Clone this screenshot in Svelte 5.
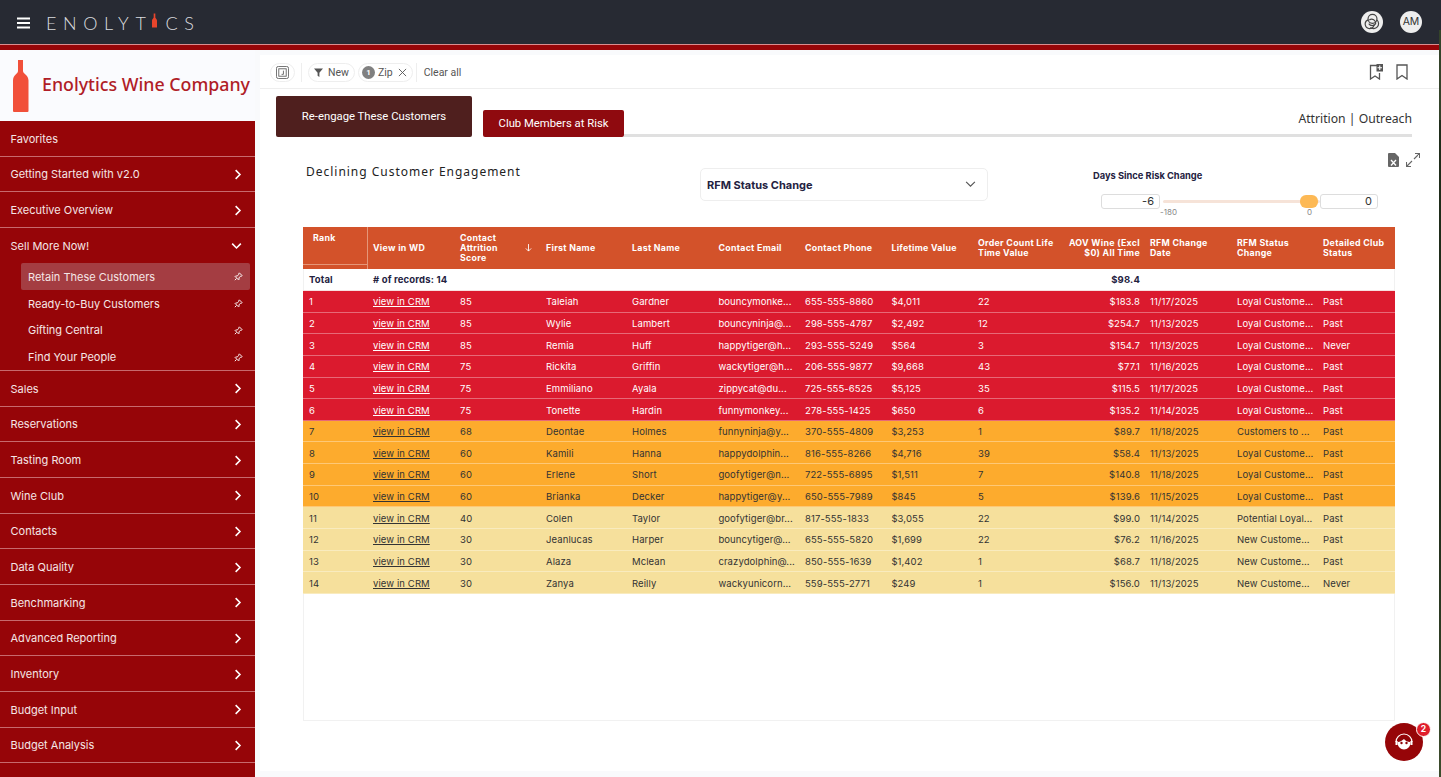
<script>
  const menuTop = ['Favorites', 'Getting Started with v2.0', 'Executive Overview'];
  const subs = ['Retain These Customers', 'Ready-to-Buy Customers', 'Gifting Central', 'Find Your People'];
  const menuBottom = ['Sales', 'Reservations', 'Tasting Room', 'Wine Club', 'Contacts', 'Data Quality', 'Benchmarking', 'Advanced Reporting', 'Inventory', 'Budget Input', 'Budget Analysis'];
  const heads = [
    ['Rank', 'rank'], ['View in WD', 'wd'], ['Contact Attrition Score', 'score'], ['First Name', ''], ['Last Name', ''],
    ['Contact Email', ''], ['Contact Phone', ''], ['Lifetime Value', ''], ['Order Count Life Time Value', ''],
    ['AOV Wine (Excl $0) All Time', 'num'], ['RFM Change Date', 'date'], ['RFM Status Change', ''], ['Detailed Club Status', '']
  ];
  const rows = [
    ['red', 85, 'Taleiah', 'Gardner', 'bouncymonke...', '655-555-8860', '$4,011', 22, '$183.8', '11/17/2025', 'Loyal Custome...', 'Past'],
    ['red', 85, 'Wylie', 'Lambert', 'bouncyninja@...', '298-555-4787', '$2,492', 12, '$254.7', '11/13/2025', 'Loyal Custome...', 'Past'],
    ['red', 85, 'Remia', 'Huff', 'happytiger@h...', '293-555-5249', '$564', 3, '$154.7', '11/13/2025', 'Loyal Custome...', 'Never'],
    ['red', 75, 'Rickita', 'Griffin', 'wackytiger@h...', '206-555-9877', '$9,668', 43, '$77.1', '11/16/2025', 'Loyal Custome...', 'Past'],
    ['red', 75, 'Emmiliano', 'Ayala', 'zippycat@du...', '725-555-6525', '$5,125', 35, '$115.5', '11/17/2025', 'Loyal Custome...', 'Past'],
    ['red', 75, 'Tonette', 'Hardin', 'funnymonkey...', '278-555-1425', '$650', 6, '$135.2', '11/14/2025', 'Loyal Custome...', 'Past'],
    ['orange', 68, 'Deontae', 'Holmes', 'funnyninja@y...', '370-555-4809', '$3,253', 1, '$89.7', '11/18/2025', 'Customers to ...', 'Past'],
    ['orange', 60, 'Kamili', 'Hanna', 'happydolphin...', '816-555-8266', '$4,716', 39, '$58.4', '11/13/2025', 'Loyal Custome...', 'Past'],
    ['orange', 60, 'Erlene', 'Short', 'goofytiger@n...', '722-555-6895', '$1,511', 7, '$140.8', '11/18/2025', 'Loyal Custome...', 'Past'],
    ['orange', 60, 'Brianka', 'Decker', 'happytiger@y...', '650-555-7989', '$845', 5, '$139.6', '11/15/2025', 'Loyal Custome...', 'Past'],
    ['yellow', 40, 'Colen', 'Taylor', 'goofytiger@br...', '817-555-1833', '$3,055', 22, '$99.0', '11/14/2025', 'Potential Loyal...', 'Past'],
    ['yellow', 30, 'Jeanlucas', 'Harper', 'bouncytiger@...', '655-555-5820', '$1,699', 22, '$76.2', '11/16/2025', 'New Custome...', 'Past'],
    ['yellow', 30, 'Alaza', 'Mclean', 'crazydolphin@...', '850-555-1639', '$1,402', 1, '$68.7', '11/18/2025', 'New Custome...', 'Past'],
    ['yellow', 30, 'Zanya', 'Reilly', 'wackyunicorn...', '559-555-2771', '$249', 1, '$156.0', '11/13/2025', 'New Custome...', 'Never']
  ];
</script>

{#snippet chevron()}
  <svg class="chev" viewBox="0 0 10 14" width="8" height="11"><path d="M2 1.5 7.5 7 2 12.5" fill="none" stroke="#fff" stroke-width="2"/></svg>
{/snippet}
{#snippet pin()}
  <svg class="pin" viewBox="0 0 16 16" width="9" height="9"><path d="M9.5 1.5 14.5 6.5 13 7.5 11.5 7.5 8.8 10.5 9 13 8 14 2 8 3 7 5.5 7.2 8.5 4.5 8.5 3Z" fill="none" stroke="#fff" stroke-width="1.7"/><path d="M4.5 11.5 1.5 14.5" stroke="#fff" stroke-width="1.7"/></svg>
{/snippet}

<div class="page">
  <div class="window">
    <header class="top">
      <div class="brand">
        <svg class="burger" viewBox="0 0 13 12" width="13" height="12"><path d="M0 1.5h13M0 6h13M0 10.5h13" stroke="#fff" stroke-width="2"/></svg>
        <span class="logo">ENOLYT<svg class="logo-i" viewBox="0 0 6 17" width="5" height="17"><path d="M2 0h2v5c0 1 2 1.500 2 3.500V17H0V8.500C0 6.500 2 6 2 5Z" fill="#e8452c"/></svg>CS</span>
      </div>
      <div class="top-right">
        <span class="round"><svg viewBox="0 0 16 16" width="17" height="17" fill="none" stroke="#444" stroke-width="1.100"><circle cx="8" cy="5.500" r="4.200"/><path d="M3.900 6.500A4.200 4.200 0 1 0 9.500 11M12.100 6.500A4.200 4.200 0 1 1 6 13.500"/><path d="M5 6.500a3.800 3.800 0 0 1 6 3.500 3.800 3.800 0 0 1-6.500 0"/></svg></span>
        <span class="round am">AM</span>
      </div>
    </header>
    <div class="strip"></div>

    <div class="body">
      <aside class="side">
        <div class="company">
          <svg viewBox="0 0 16 52" width="16" height="52"><path d="M5 0h5v11c0 3 5.500 4 5.500 9.500V51a1 1 0 0 1-1 1H1a1 1 0 0 1-1-1V20.500C0 15 5 14 5 11Z" fill="#f1503a"/></svg>
          <span class="company-name">Enolytics Wine Company</span>
        </div>
        <nav class="menu">
          {#each menuTop as m, i}
            <div class="item">{m}{#if i > 0}{@render chevron()}{/if}</div>
          {/each}
          <div class="group">
            <div class="item open">Sell More Now!<svg class="chev" viewBox="0 0 14 10" width="11" height="8"><path d="M1.500 2 7 7.500 12.500 2" fill="none" stroke="#fff" stroke-width="2"/></svg></div>
            {#each subs as s, i}
              <div class="sub" class:active={i === 0}>{s}{@render pin()}</div>
            {/each}
          </div>
          {#each menuBottom as m}
            <div class="item">{m}{@render chevron()}</div>
          {/each}
        </nav>
      </aside>

      <main class="main">
        <div class="filterbar">
          <div class="filters">
            <span class="pill square"><svg viewBox="0 0 14 14" width="13" height="13" fill="none" stroke="#666"><rect x=".5" y=".5" width="13" height="13" rx="2"/><rect x="3" y="3" width="8" height="8"/><path d="M8 5v4H6"/></svg></span>
            <span class="vr"></span>
            <span class="pill"><svg viewBox="0 0 10 10" width="9" height="9"><path d="M0 .5h10L6 5.200V10L4 8.500V5.200Z" fill="#555"/></svg>New</span>
            <span class="pill zip"><span class="count">1</span>Zip<svg viewBox="0 0 10 10" width="9" height="9"><path d="M1 1l8 8M9 1 1 9" stroke="#555" stroke-width="1"/></svg></span>
            <span class="vr"></span>
            <span class="clear">Clear all</span>
          </div>
          <div class="marks">
            <svg viewBox="0 0 14 16" width="14" height="16" fill="none" stroke="#555" stroke-width="1.300"><path d="M8 1.500H1.500V15L6 12l4.500 3V9"/><rect x="7.500" y="0" width="6.500" height="7.500" fill="#555" stroke="none"/><path d="M10.750 1.500v4.500M8.500 3.750h4.500" stroke="#fff" stroke-width="1.100"/></svg>
            <svg viewBox="0 0 12 16" width="12" height="16" fill="none" stroke="#555" stroke-width="1.300"><path d="M1 1h10v14l-5-3.500L1 15Z"/></svg>
          </div>
        </div>

        <div class="tabs">
          <div class="tab big">Re-engage These Customers</div>
          <div class="tab small">Club Members at Risk</div>
          <div class="tabline"><span>Attrition | Outreach</span></div>
        </div>

        <section class="panel">
          <div class="tools">
            <svg viewBox="0 0 11 14" width="11" height="14"><path d="M0 1a1 1 0 0 1 1-1h6l4 4v9a1 1 0 0 1-1 1H1a1 1 0 0 1-1-1Z" fill="#666"/><path d="M3 7l5 5.500M8 7l-5 5.500" stroke="#fff" stroke-width="1.300"/></svg>
            <svg viewBox="0 0 14 14" width="14" height="14" fill="none" stroke="#666" stroke-width="1.100"><path d="M8 6l5.500-5.500M9 .5h4.500V5M6 8 .5 13.500M.5 9v4.500H5"/></svg>
          </div>
          <div class="controls">
            <h2>Declining Customer Engagement</h2>
            <div class="select"><b>RFM Status Change</b><svg viewBox="0 0 12 8" width="11" height="7"><path d="M1 1l5 5 5-5" fill="none" stroke="#555" stroke-width="1.300"/></svg></div>
            <div class="range">
              <div class="range-label">Days Since Risk Change</div>
              <div class="range-row">
                <span class="box first">-6</span>
                <span class="track"><span class="thumb"></span><span class="tick start">-180</span><span class="tick end">0</span></span>
                <span class="box">0</span>
              </div>
            </div>
          </div>

          <div class="table">
            <div class="row head">
              {#each heads as h}
                <div class="cell {h[1]}">
                  {#if h[1] === 'score'}<span class="score-t">{h[0]}</span><svg viewBox="0 0 8 9" width="7" height="8"><path d="M4 0v8M1 5l3 3 3-3" fill="none" stroke="#fff"/></svg>
                  {:else if h[1] === 'rank'}<span class="rank-t">{h[0]}</span>
                  {:else}{h[0]}{/if}
                </div>
              {/each}
            </div>
            <div class="row total">
              <div class="cell">Total</div>
              <div class="cell span"># of records: 14</div>
              <div class="cell num">$98.4</div>
            </div>
            {#each rows as r, i}
              <div class="row data {r[0]}">
                <div class="cell">{i + 1}</div>
                <div class="cell"><u>view in CRM</u></div>
                <div class="cell">{r[1]}</div>
                <div class="cell">{r[2]}</div>
                <div class="cell">{r[3]}</div>
                <div class="cell">{r[4]}</div>
                <div class="cell">{r[5]}</div>
                <div class="cell">{r[6]}</div>
                <div class="cell">{r[7]}</div>
                <div class="cell num">{r[8]}</div>
                <div class="cell">{r[9]}</div>
                <div class="cell">{r[10]}</div>
                <div class="cell">{r[11]}</div>
              </div>
            {/each}
          </div>
        </section>
      </main>
    </div>
  </div>
  <div class="wallpaper"></div>

  <div class="chat">
    <svg viewBox="0 0 24 24" width="24" height="24"><path d="M4 12a8 8 0 0 1 16 0" fill="none" stroke="#fff" stroke-width="1.200"/><path d="M5.500 12.500C5.500 7 18.500 7 18.500 12.500c0 4-3 7-6.500 7s-6.500-3-6.500-7Z" fill="#fff"/><path d="M6 12c2 0 3.500-1 6-3 1.500 2 3.500 3 6 3v-3L12 6.500 6 9Z" fill="#8f0508"/><circle cx="9.500" cy="13" r="1.200" fill="#8f0508"/><circle cx="14.500" cy="13" r="1.200" fill="#8f0508"/><path d="M3.500 11h2v4h-2zM18.500 11h2v4h-2z" fill="#fff"/></svg>
    <span class="badge">2</span>
  </div>
</div>

<style>
  :global(body) { margin: 0; background: #fff; overflow: hidden; }
  .page { display: flex; width: 1441px; height: 777px; position: relative; overflow: hidden; font-family: Inter, sans-serif; }
  .window { width: 1439px; height: 777px; display: flex; flex-direction: column; background: #f9fafc; }
  .wallpaper { width: 2px; background: linear-gradient(#272a33 0 30px, #34432a 30px 120px, #1f2c1a 120px 500px, #3c4c2c); }

  .top { height: 44px; background: #272a33; display: flex; justify-content: space-between; align-items: center; padding: 0 17px; flex: none; }
  .brand { display: flex; align-items: center; gap: 16px; margin-top: 1px; }
  .burger { display: block; }
  .logo { font: 300 18px Lato, sans-serif; letter-spacing: 6.6px; color: #d9dbdf; display: flex; align-items: center; }
  .logo-i { margin: -5px 8px 0 0; }
  .top-right { display: flex; gap: 17px; margin-top: -1px; }
  .round { width: 22px; height: 22px; border-radius: 50%; background: #eeeeee; display: flex; align-items: center; justify-content: center; }
  .am { font-size: 10.5px; color: #333; }
  .strip { height: 6px; flex: none; background: #960508; border-top: 1px solid #d98d8f; box-sizing: border-box; }

  .body { display: flex; flex: 1; min-height: 0; }
  .side { width: 255px; flex: none; display: flex; flex-direction: column; height: 727px; }
  .company { height: 71px; flex: none; display: flex; align-items: center; gap: 13px; padding-left: 13px; box-sizing: border-box; background: #fafbfe; }
  .company-name { color: #b01d27; font: 500 17.8px "Noto Sans", sans-serif; white-space: nowrap; margin-top: -3px; }
  .menu { flex: 1; background: #960508; color: #f5e6e6; font-size: 11px; }
  .item { height: 35.67px; box-sizing: border-box; border-bottom: 1px solid #c76a6d; display: flex; align-items: center; justify-content: space-between; padding: 1px 13px 0 10.500px; }
  .item.open { border-bottom: 0; height: 35px; }
  .group { border-bottom: 1px solid #c76a6d; height: 143px; box-sizing: border-box; }
  .sub { height: 26.800px; margin: 0 5px 0 21px; padding: 1px 7px 0; box-sizing: border-box; border-radius: 2px; display: flex; align-items: center; justify-content: space-between; }
  .sub.active { background: #a43d42; }
  .chev { display: block; }
  .pin { display: block; }

  .main { flex: 1; margin: 5px 0 6px 5px; background: #fff; display: flex; flex-direction: column; min-width: 0; }
  .filterbar { height: 34px; flex: none; box-sizing: border-box; border-bottom: 1px solid #eeeeee; display: flex; justify-content: space-between; align-items: center; padding: 0 31px 0 10px; }
  .filters { display: flex; align-items: center; font: 400 10.5px Roboto, sans-serif; color: #555; padding-top: 1px; }
  .pill { height: 19px; box-sizing: border-box; border: 1px solid #eeeeee; border-radius: 10px; display: flex; align-items: center; gap: 5px; padding: 0 5px; margin-right: 3px; }
  .square { width: 25px; padding: 0; justify-content: center; border-radius: 10px; margin-right: 6px; }
  .zip { padding-left: 3px; gap: 3px; }
  .zip svg { margin-left: 2px; }
  .count { width: 13px; height: 13px; border-radius: 50%; background: #808080; color: #fff; font-size: 8px; font-weight: 700; display: flex; align-items: center; justify-content: center; }
  .vr { width: 1px; height: 19px; background: #eeeeee; margin-right: 6px; }
  .clear { margin-left: 1px; }
  .marks { display: flex; gap: 13px; align-items: center; }

  .tabs { flex: none; display: flex; align-items: flex-end; padding: 0 27px 0 16px; margin-top: 7px; box-sizing: border-box; height: 41px; }
  .tab { background: #8f0a0f; color: #fff; font: 400 11.300px Roboto, sans-serif; display: flex; align-items: center; justify-content: center; border-radius: 2px; flex: none; }
  .big { width: 196px; height: 41px; background: #4f1f1e; padding-bottom: 1px; box-sizing: border-box; }
  .small { width: 141px; height: 27px; margin-left: 11px; padding-bottom: 1px; box-sizing: border-box; }
  .tabline { flex: 1; border-bottom: 3px solid #e0e0e0; height: 26px; box-sizing: border-box; text-align: right; font: 400 12.200px "Noto Sans", sans-serif; color: #333; }
  .tabline span { display: block; margin-top: -1px; line-height: 17px; }

  .panel { flex: 1; position: relative; padding: 0 44px 0 43px; min-height: 0; }
  .tools { position: absolute; right: 19px; top: 16px; display: flex; gap: 7px; align-items: center; }
  .controls { height: 90px; display: flex; position: relative; box-sizing: border-box; padding: 26px 0 0 3px; }
  h2 { margin: 0; font: 400 12px "Noto Sans", sans-serif; letter-spacing: .98px; color: #222; width: 394px; flex: none; height: 20px; }
  .select { width: 288px; height: 33px; flex: none; margin-top: 5px; box-sizing: border-box; border: 1px solid #eeeeee; border-radius: 5px; display: flex; align-items: center; justify-content: space-between; padding: 0 11px 0 6px; font: 400 11px Inter, sans-serif; color: #24223f; }
  .select b { font-weight: 700; }
  .range { margin-left: 113px; width: 278px; flex: none; }
  .range-label { font: 700 9.300px Inter, sans-serif; color: #24223f; margin: 7px 0 0 -8px; }
  .range-row { display: flex; align-items: center; margin-top: 13px; }
  .box { width: 58px; height: 15px; box-sizing: border-box; border: 1px solid #dddddd; border-radius: 3px; text-align: right; padding-right: 5px; font-size: 11px; line-height: 13px; color: #333; flex: none; }
  .first { width: 59px; }
  .track { position: relative; height: 3px; width: 157px; margin-left: 3px; flex: none; background: #f6e3d8; border-radius: 2px; }
  .thumb { position: absolute; right: 2px; top: -5px; width: 18px; height: 13px; border-radius: 6px; background: #fdb955; }
  .tick { position: absolute; top: 7px; font-size: 8px; color: #888; }
  .start { left: -3px; }
  .end { right: 8px; }

  .table { width: 1092px; height: 494px; box-shadow: inset 0 0 0 1px #f1f1f1; font: 400 9.500px Inter, sans-serif; letter-spacing: .1px; }
  .row { display: grid; grid-template-columns: 65px 87px 86px 86px 86.400px 86.600px 86.400px 86.600px 86px 86px 87px 86px 76px; align-items: center; }
  .head { height: 42px; background: #d3522a; color: #fff; font-weight: 700; font-size: 8.800px; letter-spacing: .3px; line-height: 10px; }
  .total { height: 22px; font-weight: 700; letter-spacing: .15px; color: #24223f; border-bottom: 1px solid #f7e0e0; box-sizing: border-box; }
  .total .span { grid-column: 2 / 10; }
  .total .num { grid-column: 10; }
  .data { height: 21.650px; box-sizing: border-box; border-bottom: 1px solid rgba(255, 255, 255, .35); padding-top: 1px; }
  .red { background: #db1a2e; color: #fff; }
  .orange { background: #fdab2d; color: #333; }
  .yellow { background: #f6e09c; color: #333; }
  .cell { padding: 0 5px; white-space: nowrap; overflow: hidden; min-width: 0; }
  .head .cell { white-space: normal; }
  .num { text-align: right; }
  .head .rank { height: 100%; padding: 0; border-right: 1px solid #e59678; position: relative; box-sizing: border-box; }
  .rank-t { position: absolute; left: 10px; top: 6px; }
  .rank::after { content: ""; position: absolute; left: 0; right: 0; bottom: 4px; border-bottom: 1px solid #e59678; }
  .score { display: flex; align-items: center; justify-content: space-between; padding-right: 9px; }
  .score-t { width: 54px; }
  .head .date { padding-right: 24px; }
  .total .cell:first-child, .data .cell:first-child { padding-left: 6px; }

  .chat { position: absolute; left: 1385px; top: 723px; width: 38px; height: 38px; border-radius: 50%; background: #960508; display: flex; align-items: center; justify-content: center; }
  .badge { position: absolute; right: -8px; top: -1px; width: 13px; height: 13px; border-radius: 50%; background: #e01e2c; color: #fff; border: 1px solid #fff; font: 700 8.500px/13px Inter, sans-serif; text-align: center; }
</style>
